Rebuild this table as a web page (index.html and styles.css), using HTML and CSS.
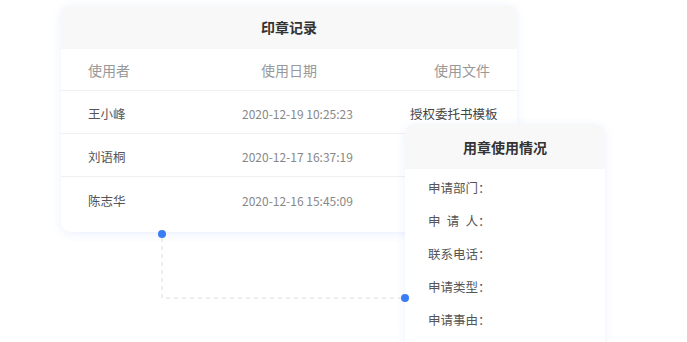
FILE: index.html
```html
<!DOCTYPE html>
<html lang="zh-CN">
<head>
<meta charset="utf-8">
<title>印章记录</title>
<link rel="stylesheet" href="styles.css">
</head>
<body>
<div class="canvas">
  <svg class="connector" width="687" height="342" viewBox="0 0 687 342">
    <path d="M162 238 V298 H401" fill="none" stroke="#dcdcdc" stroke-width="1" stroke-dasharray="4 4"/>
  </svg>

  <section class="card records">
    <header class="card-head">印章记录</header>
    <div class="row head-row">
      <span class="c1">使用者</span>
      <span class="c2 h2">使用日期</span>
      <span class="c3 h3">使用文件</span>
    </div>
    <div class="row">
      <span class="c1 name">王小峰</span>
      <span class="c2 date">2020-12-19 10:25:23</span>
      <span class="c3 file">授权委托书模板</span>
    </div>
    <div class="row">
      <span class="c1 name">刘语桐</span>
      <span class="c2 date">2020-12-17 16:37:19</span>
      <span class="c3 file"></span>
    </div>
    <div class="row last">
      <span class="c1 name">陈志华</span>
      <span class="c2 date">2020-12-16 15:45:09</span>
      <span class="c3 file"></span>
    </div>
  </section>

  <span class="dot dot-a"></span>

  <section class="card usage">
    <header class="card-head">用章使用情况</header>
    <ul class="fields">
      <li>申请部门：</li>
      <li><span class="spread">申请</span>人：</li>
      <li>联系电话：</li>
      <li>申请类型：</li>
      <li>申请事由：</li>
    </ul>
  </section>

  <span class="dot dot-b"></span>
</div>
</body>
</html>
```

FILE: styles.css
```css
html, body {
  margin: 0;
  padding: 0;
  background: #ffffff;
}

body {
  font-family: "Noto Sans CJK SC", "Noto Sans", sans-serif;
  color: #555;
  width: 687px;
  height: 342px;
  overflow: hidden;
}

.canvas {
  position: relative;
  width: 687px;
  height: 342px;
  overflow: hidden;
}

.connector {
  position: absolute;
  left: 0;
  top: 0;
}

.card {
  position: absolute;
  background: #fff;
  border-radius: 10px;
  box-shadow: 0 2px 10px rgba(60, 110, 255, 0.10);
  overflow: hidden;
}

.card-head {
  background: #f8f8f8;
  color: #333;
  font-size: 14px;
  font-weight: 700;
  display: flex;
  align-items: center;
  justify-content: center;
}

.records {
  left: 61px;
  top: 5px;
  width: 456px;
  height: 227px;
}

.records .card-head {
  height: 44px;
}

.row {
  display: grid;
  grid-template-columns: 154px 168px 1fr;
  padding-left: 27px;
  height: 43px;
  align-items: center;
  border-bottom: 1px solid #f0f0f2;
  box-sizing: border-box;
  padding-top: 3px;
}

.head-row {
  height: 42px;
  color: #999;
  font-size: 14px;
  padding-top: 1px;
}

.row.last {
  border-bottom: none;
}

.h2 { padding-left: 19px; }
.h3 { padding-left: 24px; }

.name {
  font-size: 12.5px;
  color: #555;
}

.date {
  font-size: 12px;
  color: #888;
}

.file {
  font-size: 12.5px;
  color: #444;
}

.usage {
  left: 405px;
  top: 124px;
  width: 200px;
  height: 218px;
  border-bottom-left-radius: 0;
  border-bottom-right-radius: 0;
}

.usage .card-head {
  height: 45px;
}

.fields {
  list-style: none;
  margin: 0;
  padding: 2px 0 0 23px;
}

.fields li {
  height: 33px;
  display: flex;
  align-items: center;
  font-size: 12.5px;
  color: #555;
}

.spread {
  letter-spacing: 0.5em;
}

.dot {
  position: absolute;
  width: 8px;
  height: 8px;
  border-radius: 50%;
  background: #3a7cf5;
}

.dot-a {
  left: 158px;
  top: 230px;
}

.dot-b {
  left: 401px;
  top: 294px;
}
```
